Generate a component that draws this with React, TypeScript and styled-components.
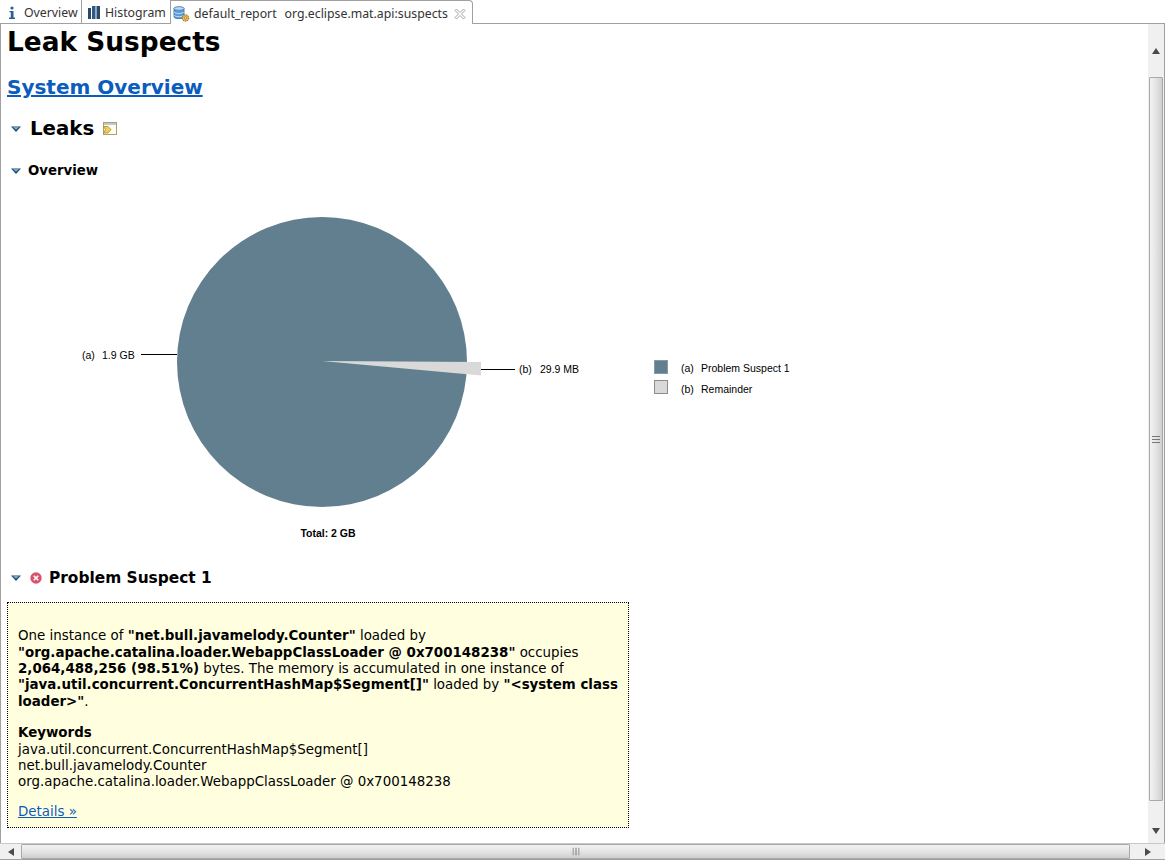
import React from "react";
import styled, { createGlobalStyle } from "styled-components";

const GlobalStyle = createGlobalStyle`
  html, body {
    margin: 0;
    padding: 0;
    background: #fff;
    overflow: hidden;
  }
`;

const Window = styled.div`
  width: 1165px;
  height: 860px;
  display: grid;
  grid-template-rows: 24px 1fr 17px;
  box-sizing: border-box;
  border-left: 1px solid #a0a0a0;
  border-right: 1px solid #a0a0a0;
  background: #fff;
`;

const TabBar = styled.div`
  display: flex;
  align-items: stretch;
  margin-left: -1px;
  margin-right: -1px;
  height: 24px;
  box-sizing: border-box;
  border-bottom: 1px solid #a0a0a0;
  background: #fff;
`;

const Tab = styled.div<{ $active?: boolean; $width: number; $pad: number }>`
  width: ${(p) => p.$width}px;
  height: ${(p) => (p.$active ? 24 : 23)}px;
  box-sizing: border-box;
  display: flex;
  align-items: center;
  flex-shrink: 0;
  padding-left: ${(p) => p.$pad}px;
  padding-top: 2px;
  font: 12.3px "Noto Sans", "Open Sans", sans-serif;
  color: #333;
  white-space: nowrap;
  background: #fff;
  border-right: 1px solid #a0a0a0;
  border-top: ${(p) => (p.$active ? "1px solid #a0a0a0" : "none")};
  border-top-right-radius: ${(p) => (p.$active ? "4px" : "0")};
`;

const TabLabel = styled.span<{ $gap: number }>`
  margin-left: ${(p) => p.$gap}px;
`;

const TabPart = styled.span`
  margin-left: 8px;
`;

const CloseMark = styled.span`
  display: flex;
  margin-left: 6px;
`;

const Middle = styled.div`
  display: grid;
  grid-template-columns: 1fr 16px;
  min-height: 0;
`;

const Report = styled.main`
  padding: 1px 0 0 6px;
  overflow: hidden;
  font: 13.4px/16.4px "DejaVu Sans", Verdana, sans-serif;
  color: #000;
`;

const Title = styled.h1`
  margin: 0;
  font: bold 26.4px/34px "DejaVu Sans", Verdana, sans-serif;
`;

const OverviewLink = styled.a`
  display: block;
  width: max-content;
  margin-top: 15px;
  font: bold 20px/26px "DejaVu Sans", Verdana, sans-serif;
  color: #0a5cbd;
  text-decoration: underline;
`;

const SectionRow = styled.div<{ $top: number; $gap: number }>`
  display: flex;
  align-items: center;
  gap: ${(p) => p.$gap}px;
  margin-top: ${(p) => p.$top}px;
  padding-left: 4px;
`;

const SectionTitle = styled.h2<{ $size: number }>`
  margin: 0;
  font: bold ${(p) => p.$size}px/1.2 "DejaVu Sans", Verdana, sans-serif;
`;

const StatusSlot = styled.span`
  display: flex;
  margin-left: 2px;
`;

const Chart = styled.svg`
  display: block;
  margin: 7px 0 0 -7px;
`;

const SuspectBox = styled.section`
  width: 622px;
  height: 226px;
  margin-top: 15px;
  padding: 25px 10px 0;
  box-sizing: border-box;
  background: #ffffe0;
  border: 1px dotted #000;
`;

const Paragraph = styled.p`
  margin: 0 0 15px;
`;

const KeywordList = styled.div`
  margin-bottom: 13px;
`;

const Keyword = styled.div``;

const DetailsLink = styled.a`
  color: #0a5cbd;
  text-decoration: underline;
`;

const VerticalBar = styled.div`
  display: flex;
  flex-direction: column;
  background: #f0f0f0;
`;

const HorizontalBar = styled.div`
  display: flex;
  margin-left: -1px;
  margin-right: -1px;
  background: #f0f0f0;
  border-top: 1px solid #c8c8c8;
  box-sizing: border-box;
  border-bottom: 1px solid #a0a0a0;
`;

const ArrowCell = styled.div<{ $size: number }>`
  flex: 0 0 ${(p) => p.$size}px;
  display: flex;
  align-items: center;
  justify-content: center;
`;

const VerticalThumb = styled.div`
  flex: 1;
  margin: 0 1px;
  display: flex;
  align-items: center;
  justify-content: center;
  box-sizing: border-box;
  border: 1px solid #a9a9a9;
  border-radius: 1px;
  background: linear-gradient(to right, #f2f2f2, #e6e6e6 45%, #cfcfcf);
`;

const HorizontalThumb = styled.div`
  flex: 0 0 1109px;
  display: flex;
  align-items: center;
  justify-content: center;
  box-sizing: border-box;
  border: 1px solid #a9a9a9;
  border-radius: 1px;
  background: linear-gradient(to bottom, #f2f2f2, #e6e6e6 45%, #cfcfcf);
`;

const TrackSpace = styled.div<{ $size: number }>`
  flex: 0 0 ${(p) => p.$size}px;
`;

const InfoIcon = () => (
  <svg width="8" height="13" viewBox="0 0 8 13">
    <circle cx="4" cy="2" r="1.6" fill="#2b5f8f" />
    <path d="M1.5 5h4v6.5h1.5V13H1v-1.5h1.8V6.3H1.5z" fill="#2b5f8f" />
  </svg>
);

const HistogramIcon = () => (
  <svg width="12" height="13" viewBox="0 0 12 13">
    <rect x="0" y="2" width="3" height="11" fill="#27496b" />
    <rect x="4" y="0" width="3.5" height="13" fill="#2f5a85" />
    <rect x="8.5" y="0" width="3.5" height="13" fill="#27496b" />
  </svg>
);

const ReportIcon = () => (
  <svg width="17" height="18" viewBox="0 0 17 18">
    <path d="M1 3.5C1 1.5 11 1.5 11 3.5V12C11 14 1 14 1 12z" fill="#5b9bd8" stroke="#2c6aa8" strokeWidth="0.8" />
    <ellipse cx="6" cy="3.5" rx="5" ry="1.8" fill="#bcd9f3" stroke="#2c6aa8" strokeWidth="0.6" />
    <path d="M1 7.2C2.5 9 9.5 9 11 7.2M1 10.4C2.5 12.2 9.5 12.2 11 10.4" fill="none" stroke="#d5e6f6" strokeWidth="0.8" />
    <circle cx="12.5" cy="13" r="3.3" fill="#e9b54a" stroke="#8a6420" strokeWidth="1" strokeDasharray="1.4 0.8" />
    <circle cx="12.5" cy="13" r="1.1" fill="#fff6dc" stroke="#8a6420" strokeWidth="0.6" />
  </svg>
);

const CloseIcon = () => (
  <svg width="12" height="12" viewBox="0 0 12 12">
    <path
      d="M1 2.5 2.5 1 6 4.5 9.5 1 11 2.5 7.5 6 11 9.5 9.5 11 6 7.5 2.5 11 1 9.5 4.5 6z"
      fill="#fff"
      stroke="#9a9a9a"
      strokeWidth="0.9"
    />
  </svg>
);

const TwistyIcon = () => (
  <svg width="10" height="6" viewBox="0 0 10 6">
    <path d="M0 0.5h10L5 6z" fill="#1f4f78" />
    <path d="M2 1.2h6L5 3.4z" fill="#8fb6d6" />
  </svg>
);

const OpenQueryIcon = () => (
  <svg width="14" height="13" viewBox="0 0 14 13">
    <rect x="0.5" y="0.5" width="13" height="12" fill="#fffdf0" stroke="#a8a070" />
    <rect x="1" y="1" width="12" height="2" fill="#b9c9da" />
    <path d="M0.5 4.5h4.5l3 3-3 3.5H0.5l2-3.5z" fill="#f2cf5a" stroke="#a98a22" strokeWidth="0.8" />
  </svg>
);

const ErrorIcon = () => (
  <svg width="12" height="12" viewBox="0 0 12 12">
    <circle cx="6" cy="6" r="5.7" fill="#d9536b" />
    <path d="M3.8 3.8l4.4 4.4M8.2 3.8l-4.4 4.4" stroke="#fff" strokeWidth="1.6" />
  </svg>
);

const ArrowIcon = ({ rotate }: { rotate: number }) => (
  <svg width="8" height="6" viewBox="0 0 8 6" style={{ transform: `rotate(${rotate}deg)` }}>
    <path d="M0 6L4 0l4 6z" fill="#4a4a4a" />
  </svg>
);

const GripIcon = ({ rotate }: { rotate: number }) => (
  <svg width="8" height="7" viewBox="0 0 8 7" style={{ transform: `rotate(${rotate}deg)` }}>
    <path d="M0 .5h8M0 3.5h8M0 6.5h8" stroke="#777" strokeWidth="1" />
  </svg>
);

const chartFont = { fontFamily: "'Liberation Sans', Arial, sans-serif", fontSize: 10.5 };

const PieChart = () => (
  <Chart width="830" height="368" viewBox="0 0 830 368">
    <g transform="translate(0 -186)">
      <circle cx="322" cy="362" r="145" fill="#617f8f" />
      <path d="M322 361 481 362V375.5z" fill="#d9d9d9" />
      <path d="M141 354.5H177M481 369.5H515" stroke="#000" strokeWidth="1" />
      <text x="82" y="359" {...chartFont}>(a)</text>
      <text x="102" y="359" {...chartFont}>1.9 GB</text>
      <text x="519" y="373" {...chartFont}>(b)</text>
      <text x="540" y="373" {...chartFont}>29.9 MB</text>
      <rect x="654.5" y="360.5" width="13" height="13" fill="#617f8f" stroke="#8a9aa4" />
      <rect x="654.5" y="380.5" width="13" height="13" fill="#d9d9d9" stroke="#8c8c8c" />
      <text x="681" y="372" {...chartFont}>(a)</text>
      <text x="701" y="372" {...chartFont}>Problem Suspect 1</text>
      <text x="681" y="393" {...chartFont}>(b)</text>
      <text x="701" y="393" {...chartFont}>Remainder</text>
      <text x="328" y="537" textAnchor="middle" fontWeight="bold" {...chartFont}>
        Total: 2 GB
      </text>
    </g>
  </Chart>
);

const App: React.FC = () => {
  return (
    <Window>
      <GlobalStyle />
      <TabBar>
        <Tab $width={82} $pad={8}>
          <InfoIcon />
          <TabLabel $gap={8}>Overview</TabLabel>
        </Tab>
        <Tab $width={89} $pad={6}>
          <HistogramIcon />
          <TabLabel $gap={5}>Histogram</TabLabel>
        </Tab>
        <Tab $active $width={302} $pad={2}>
          <ReportIcon />
          <TabLabel $gap={4}>default_report</TabLabel>
          <TabPart>org.eclipse.mat.api:suspects</TabPart>
          <CloseMark>
            <CloseIcon />
          </CloseMark>
        </Tab>
      </TabBar>

      <Middle>
        <Report>
          <Title>Leak Suspects</Title>
          <OverviewLink href="#">System Overview</OverviewLink>
          <SectionRow $top={17} $gap={9}>
            <TwistyIcon />
            <SectionTitle $size={19.8}>Leaks</SectionTitle>
            <OpenQueryIcon />
          </SectionRow>
          <SectionRow $top={22} $gap={7}>
            <TwistyIcon />
            <SectionTitle $size={13.3}>Overview</SectionTitle>
          </SectionRow>
          <PieChart />
          <SectionRow $top={15} $gap={7}>
            <TwistyIcon />
            <StatusSlot>
              <ErrorIcon />
            </StatusSlot>
            <SectionTitle $size={15.4}>Problem Suspect 1</SectionTitle>
          </SectionRow>
          <SuspectBox>
            <Paragraph>
              One instance of <b>"net.bull.javamelody.Counter"</b> loaded by{" "}
              <b>"org.apache.catalina.loader.WebappClassLoader @ 0x700148238"</b> occupies{" "}
              <b>2,064,488,256 (98.51%)</b> bytes. The memory is accumulated in one instance of{" "}
              <b>"java.util.concurrent.ConcurrentHashMap$Segment[]"</b> loaded by{" "}
              <b>"&lt;system class loader&gt;"</b>.
            </Paragraph>
            <b>Keywords</b>
            <KeywordList>
              <Keyword>java.util.concurrent.ConcurrentHashMap$Segment[]</Keyword>
              <Keyword>net.bull.javamelody.Counter</Keyword>
              <Keyword>org.apache.catalina.loader.WebappClassLoader @ 0x700148238</Keyword>
            </KeywordList>
            <DetailsLink href="#">Details »</DetailsLink>
          </SuspectBox>
        </Report>
        <VerticalBar>
          <ArrowCell $size={53}>
            <ArrowIcon rotate={0} />
          </ArrowCell>
          <VerticalThumb>
            <GripIcon rotate={0} />
          </VerticalThumb>
          <TrackSpace $size={18} />
          <ArrowCell $size={24}>
            <ArrowIcon rotate={180} />
          </ArrowCell>
        </VerticalBar>
      </Middle>

      <HorizontalBar>
        <ArrowCell $size={21}>
          <ArrowIcon rotate={-90} />
        </ArrowCell>
        <HorizontalThumb>
          <GripIcon rotate={90} />
        </HorizontalThumb>
        <TrackSpace $size={9} />
        <ArrowCell $size={17}>
          <ArrowIcon rotate={90} />
        </ArrowCell>
      </HorizontalBar>
    </Window>
  );
};

export default App;
